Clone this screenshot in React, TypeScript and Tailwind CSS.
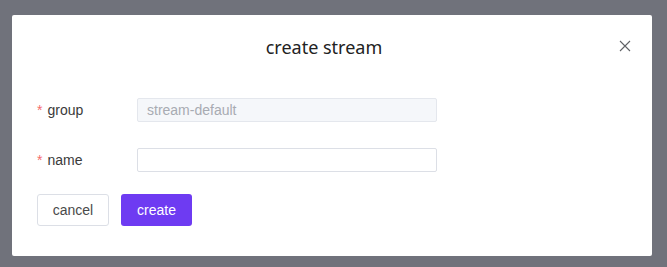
import React from "react";

export default function App() {
  return (
    <div className="w-[667px] h-[267px] bg-[#70727b] overflow-hidden pt-[15px] pl-[12px]">
      <div className="relative w-[640px] h-[241px] bg-white rounded-[2px]">
        <div className="h-[64px] flex items-center justify-center pr-[16px]">
          <span className="text-[18px] text-[#222222] font-['Noto_Sans',sans-serif] leading-none">create stream</span>
        </div>
        <button className="absolute right-[21px] top-[25px] w-[12px] h-[12px] flex items-center justify-center">
          <svg width="12" height="12" viewBox="0 0 12 12">
            <path d="M1 1L11 11M11 1L1 11" stroke="#606266" strokeWidth="1.1" />
          </svg>
        </button>
        <div className="pl-[25px] pt-[19px] font-['Liberation_Sans',Arial,sans-serif]">
          <div className="flex items-center h-[24px]">
            <div className="w-[100px] text-[14px] text-[#3a3a3a] flex items-center">
              <span className="text-[#f56c6c] mr-[5px]">*</span>
              <span>group</span>
            </div>
            <div className="w-[300px] h-[24px] border border-[#e4e7ed] bg-[#f5f7fa] rounded-[2px] flex items-center px-[9px] text-[14px] text-[#a8abb2]">
              stream-default
            </div>
          </div>
          <div className="flex items-center h-[24px] mt-[26px]">
            <div className="w-[100px] text-[14px] text-[#3a3a3a] flex items-center">
              <span className="text-[#f56c6c] mr-[5px]">*</span>
              <span>name</span>
            </div>
            <div className="w-[300px] h-[24px] border border-[#dcdfe6] bg-white rounded-[2px]" />
          </div>
          <div className="flex mt-[22px] gap-[12px]">
            <button className="w-[72px] h-[32px] border border-[#dcdfe6] rounded-[3px] bg-white text-[14px] text-[#4a4a4a]">
              cancel
            </button>
            <button className="w-[71px] h-[32px] rounded-[3px] bg-[#6e3bf2] text-[14px] text-white">
              create
            </button>
          </div>
        </div>
      </div>
    </div>
  );
}
